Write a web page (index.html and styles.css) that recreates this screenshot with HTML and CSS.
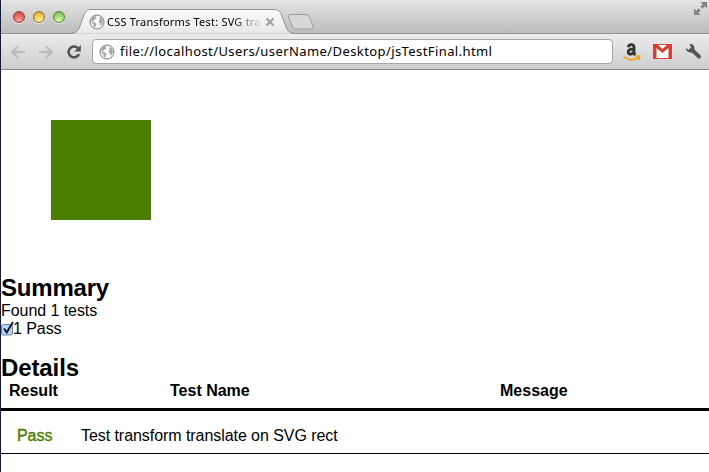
FILE: index.html
```html
<!DOCTYPE html>
<html lang="en">
<head>
<meta charset="utf-8">
<title>CSS Transforms Test</title>
<link rel="stylesheet" href="styles.css">
</head>
<body>
<svg width="0" height="0" class="defs">
  <symbol id="globe" viewBox="0 0 16 16">
    <circle cx="8" cy="8" r="7" fill="#f6f6f6" stroke="#7d7d7d" stroke-width="1"/>
    <path fill="#a6a6a6" d="M2.200 5 4.500 2.500 7.500 2 6.600 3.500 7.500 4.200 6 5.500 5 5.500 4.500 7 3.500 6.700 4 8 6 8.600 7.500 10 6.500 12 6 13.800 5 13 4.600 10.800 2.800 8.500ZM10.500 3 13 4.500 14 7.200 13.200 10 12 11.600 11.200 10.800 11.300 9.300 9.800 8.300 9.900 6.800 11.200 5.600 10 4.500Z"/>
  </symbol>
</svg>
<div class="window">
  <header class="titlebar">
    <div class="lights">
      <span class="light red"></span><span class="light yellow"></span><span class="light green"></span>
    </div>
    <div class="tab">
      <svg class="tab-shape" width="222" height="25" viewBox="0 0 222 25">
        <defs><linearGradient id="tabfill" x1="0" y1="0" x2="0" y2="1"><stop offset="0" stop-color="#fbfbfb"/><stop offset="1" stop-color="#e9e9e9"/></linearGradient></defs>
        <path fill="url(#tabfill)" stroke="#929292" d="M0 24C4 24 6 22 7.500 18L12 6C13.500 2 15 .5 19 .5H202C206 .5 208 2 209.500 6L214 18C215.500 22 217 24 222 24"/>
        <path fill="#eaeaea" d="M2 24.300H220V25H2Z"/>
      </svg>
      <svg class="tab-icon" width="16" height="16"><use href="#globe"/></svg>
      <span class="tab-title">CSS Transforms Test: SVG tra</span>
      <svg class="tab-close" width="10" height="10" viewBox="0 0 10 10"><path d="m1.500 1.500 7 7m0-7-7 7" stroke="#a3a3a3" stroke-width="2.300"/></svg>
    </div>
    <svg class="new-tab" width="28" height="18" viewBox="0 0 28 18"><path fill="#d8d8d8" stroke="#9c9c9c" d="M3 1.500H19Q21.500 1.500 22.500 4L26 13Q27 16 24 16H9Q6.500 16 5.500 13.500L1.500 4Q.8 1.500 3 1.500Z"/></svg>
    <svg class="expand" width="15" height="15" viewBox="0 0 15 15"><path fill="#858585" d="M7.500 1H14V7.500L11.800 5.300 9.400 7.700 7.300 5.600 9.700 3.200ZM1 7.500 3.200 9.700 5.600 7.300 7.700 9.400 5.300 11.800 7.500 14H1Z"/></svg>
  </header>
  <nav class="toolbar">
    <svg class="arrow" width="16" height="14" viewBox="0 0 16 14"><path d="M15 7H3M8 1.300 2.300 7 8 12.700" fill="none" stroke="#bdbdbd" stroke-width="2.300"/></svg>
    <svg class="arrow" width="16" height="14" viewBox="0 0 16 14"><path d="M1 7H13M8 1.300 13.700 7 8 12.700" fill="none" stroke="#bdbdbd" stroke-width="2.300"/></svg>
    <svg class="reload" width="16" height="16" viewBox="0 0 16 16"><path d="M11.800 4.100A5.400 5.400 0 1 0 13 10" fill="none" stroke="#505050" stroke-width="2.500"/><path fill="#505050" d="M14.800 1V7.500H8.300Z"/></svg>
    <div class="address">
      <svg width="16" height="16"><use href="#globe"/></svg>
      <span class="url">file://localhost/Users/userName/Desktop/jsTestFinal.html</span>
    </div>
    <svg class="amazon" width="20" height="20" viewBox="0 0 20 20">
      <path fill="none" stroke="#333" stroke-width="2.800" d="M6.300 5.200C6.800 2 12 1.800 12 5V10.500Q12 12 13.500 12.800M12 6.800C7.800 6.800 6.200 8 6.200 10 6.200 13.500 11.800 12.600 12 8.500"/>
      <path fill="none" stroke="#eba728" stroke-width="2" d="M1.500 14.500Q9 20.500 16.800 15.500M13.500 14.200 17.600 14.200 16.700 18"/>
    </svg>
    <svg class="gmail" width="19" height="15" viewBox="0 0 19 15"><path fill="#fff" stroke="#d9483b" d="M.5 .5H18.500V14.500H.5Z"/><path fill="#d64032" d="M0 0H4L9.500 5 15 0H19V15H15.500V4L9.500 9 3.500 4V15H0Z"/><path d="M4 14 8 9.500M15 14 11 9.500" stroke="#ddd"/></svg>
    <svg class="wrench" width="17" height="17" viewBox="0 0 17 17"><path fill="none" stroke="#555" stroke-width="3.800" stroke-linecap="round" d="m7.500 7.500 6.600 6.200"/><path fill="#555" d="M4.500 1C8 .5 10 3 9.300 6.200L8.500 9.300C4.500 10.500 1.200 8.500 .8 5L3.700 6.800 6 4.500Z"/></svg>
  </nav>
  <main class="page">
    <div class="stage"><div class="rect"></div></div>
    <h2>Summary</h2>
    <div class="line">Found 1 tests</div>
    <div class="line check-line">
      <svg width="12" height="16" viewBox="0 0 12 16"><rect x=".5" y="3.500" width="11" height="10.500" rx="2" fill="#b9d3f6" stroke="#687ca8"/><path d="m3 7.500 2.700 4L12 1" fill="none" stroke="#151a28" stroke-width="2"/></svg><span>1 Pass</span>
    </div>
    <h2 class="details">Details</h2>
    <div class="row head"><span>Result</span><span>Test Name</span><span>Message</span></div>
    <div class="row result"><span class="pass">Pass</span><span>Test transform translate on SVG rect</span></div>
  </main>
</div>
</body>
</html>
```
FILE: styles.css
```css
* { box-sizing: border-box; }
body { margin: 0; background: #fff; color: #000; font: 16px/18px "Liberation Sans", Arial, sans-serif; letter-spacing: -.06px; overflow: hidden; }
svg { display: block; flex: none; overflow: visible; }
.defs { position: absolute; }
.window { height: 472px; border-left: 1px solid #101a3a; }
.titlebar { height: 34px; display: flex; align-items: flex-start; background: linear-gradient(#e4e4e4, #bcbcbc); border-bottom: 1px solid #939393; }
.lights { display: flex; gap: 8px; padding: 11px 0 0 12px; width: 71px; flex: none; }
.light { width: 12px; height: 12px; border-radius: 50%; border: 1px solid; box-shadow: 0 1px 0 #eee; }
.red { background: radial-gradient(circle at 50% 85%, #ffaaa0, #dc6057 60%, #b9483f); border-color: #944039; }
.yellow { background: radial-gradient(circle at 50% 85%, #fff3a0, #edc04e 60%, #c89938); border-color: #99702c; }
.green { background: radial-gradient(circle at 50% 85%, #dcffac, #98cf6d 60%, #72a950); border-color: #5a813e; }
.tab { position: relative; width: 222px; height: 25px; margin-top: 9px; padding-left: 17px; display: flex; align-items: center; flex: none; }
.tab-shape { position: absolute; left: 0; top: 0; }
.tab-icon, .tab-title, .tab-close { position: relative; }
.tab-title { margin-left: 2px; width: 156px; white-space: nowrap; font: 11px/16px "Noto Sans", sans-serif; letter-spacing: .21px; -webkit-mask-image: linear-gradient(90deg, #000 80%, transparent); mask-image: linear-gradient(90deg, #000 80%, transparent); }
.tab-close { margin-left: 2px; }
.new-tab { margin: 13px 0 0 -7px; }
.expand { margin: 1px 1px 0 auto; }
.toolbar { height: 36px; display: flex; align-items: center; padding-left: 9px; background: linear-gradient(#ececec, #cdcdcd); border-bottom: 1px solid #868686; }
.arrow { margin-right: 12px; }
.reload { margin-right: 10px; }
.address { width: 521px; height: 25px; display: flex; align-items: center; padding-left: 6px; background: #fff; border: 1px solid #a6a6a6; border-radius: 4px; flex: none; }
.url { margin-left: 5px; padding-bottom: 1px; font: 13px/20px "Noto Sans", sans-serif; letter-spacing: .41px; white-space: nowrap; }
.amazon { margin-left: 9px; }
.gmail { margin-left: 11px; }
.wrench { margin-left: 13px; }
.stage { height: 204px; padding: 50px; }
.rect { width: 100px; height: 100px; background: #4b7d00; }
h2 { margin: 0; font-size: 24px; line-height: 28px; letter-spacing: -.2px; }
.check-line { display: flex; align-items: center; }
.details { margin-top: 16px; letter-spacing: -.1px; }
.row { display: grid; white-space: nowrap; }
.head { grid-template-columns: 161px 330px auto; height: 29px; padding-left: 8px; border-bottom: 3px solid #000; font-weight: bold; letter-spacing: 0; }
.result { grid-template-columns: 64px auto; height: 43px; padding: 16px 0 0 16px; border-bottom: 1px solid #000; }
.pass { color: #4b7d00; -webkit-text-stroke: .35px #4b7d00; }
```
